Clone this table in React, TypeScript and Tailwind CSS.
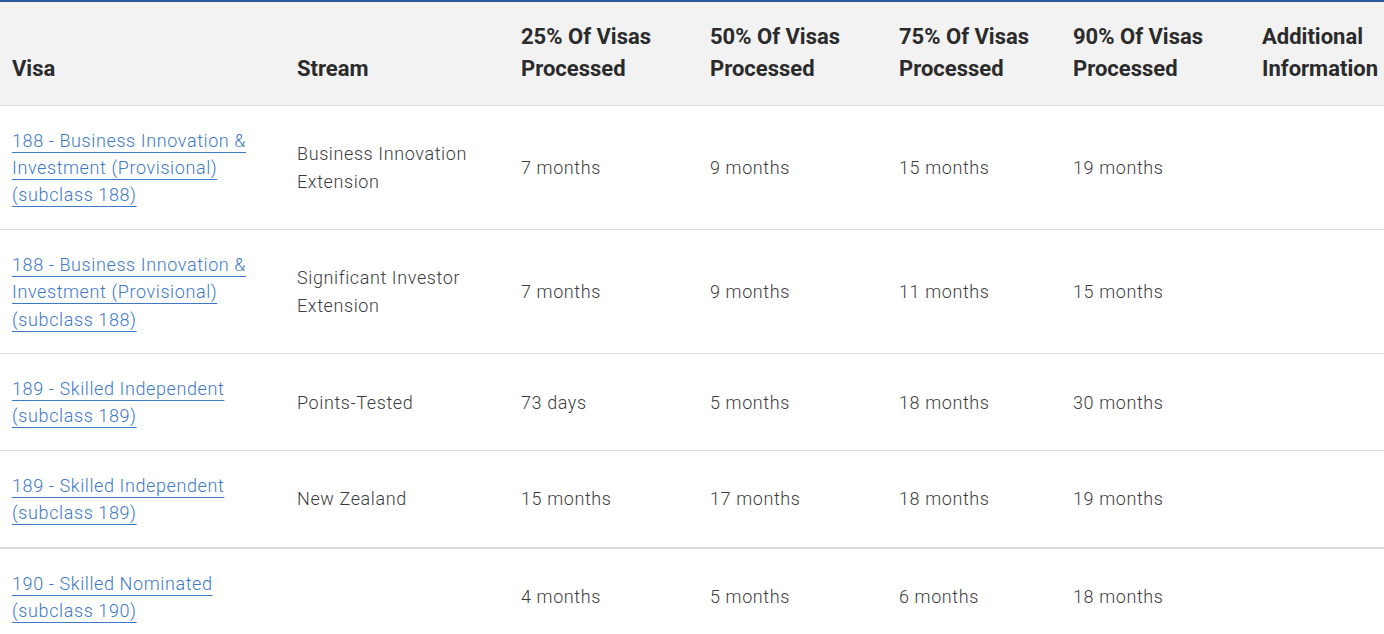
export default function App() {
  const rows = [
    { visa: ["188 - Business Innovation &", "Investment (Provisional)", "(subclass 188)"], stream: "Business Innovation Extension", p25: "7 months", p50: "9 months", p75: "15 months", p90: "19 months" },
    { visa: ["188 - Business Innovation &", "Investment (Provisional)", "(subclass 188)"], stream: "Significant Investor Extension", p25: "7 months", p50: "9 months", p75: "11 months", p90: "15 months" },
    { visa: ["189 - Skilled Independent", "(subclass 189)"], stream: "Points-Tested", p25: "73 days", p50: "5 months", p75: "18 months", p90: "30 months" },
    { visa: ["189 - Skilled Independent", "(subclass 189)"], stream: "New Zealand", p25: "15 months", p50: "17 months", p75: "18 months", p90: "19 months", thick: true },
    { visa: ["190 - Skilled Nominated", "(subclass 190)"], stream: "", p25: "4 months", p50: "5 months", p75: "6 months", p90: "18 months" },
  ];

  const headers = [
    ["Visa"],
    ["Stream"],
    ["25% Of Visas", "Processed"],
    ["50% Of Visas", "Processed"],
    ["75% Of Visas", "Processed"],
    ["90% Of Visas", "Processed"],
    ["Additional", "Information"],
  ];

  const cell = "align-middle pl-[12px] py-[20.5px] text-[18px] leading-[27.4px] font-light tracking-[0.6px] text-[#3c3c3c]";

  return (
    <div className="w-[1384px] h-[634px] overflow-hidden bg-white" style={{ fontFamily: "Roboto, 'Liberation Sans', sans-serif" }}>
      <table className="w-[1384px] table-fixed border-collapse border-t-2 border-[#2a5b9b]">
        <colgroup>
          <col className="w-[285px]" />
          <col className="w-[224px]" />
          <col className="w-[189px]" />
          <col className="w-[189px]" />
          <col className="w-[174px]" />
          <col className="w-[189px]" />
          <col className="w-[134px]" />
        </colgroup>
        <thead>
          <tr className="bg-[#f2f2f2] border-b border-[#dcdcdc]">
            {headers.map((h, i) => (
              <th key={i} className="text-left align-bottom pl-[12px] pr-1 pt-[19px] pb-[20px] text-[22px] leading-[32px] font-bold text-[#2b2b2b] whitespace-nowrap">
                {h.map((line, j) => (
                  <div key={j}>{line}</div>
                ))}
              </th>
            ))}
          </tr>
        </thead>
        <tbody>
          {rows.map((r, i) => (
            <tr key={i} className={r.thick ? "border-b-2 border-[#dcdcdc]" : "border-b border-[#dcdcdc]"}>
              <td className={cell}>
                {r.visa.map((line, j) => (
                  <div key={j}>
                    <a href="#" className="text-[#3d79c8] underline decoration-[#3d79c8] underline-offset-[5px] decoration-1">{line}</a>
                  </div>
                ))}
              </td>
              <td className={cell + " pr-8"}>{r.stream}</td>
              <td className={cell}>{r.p25}</td>
              <td className={cell}>{r.p50}</td>
              <td className={cell}>{r.p75}</td>
              <td className={cell}>{r.p90}</td>
              <td className={cell}></td>
            </tr>
          ))}
        </tbody>
      </table>
    </div>
  );
}
